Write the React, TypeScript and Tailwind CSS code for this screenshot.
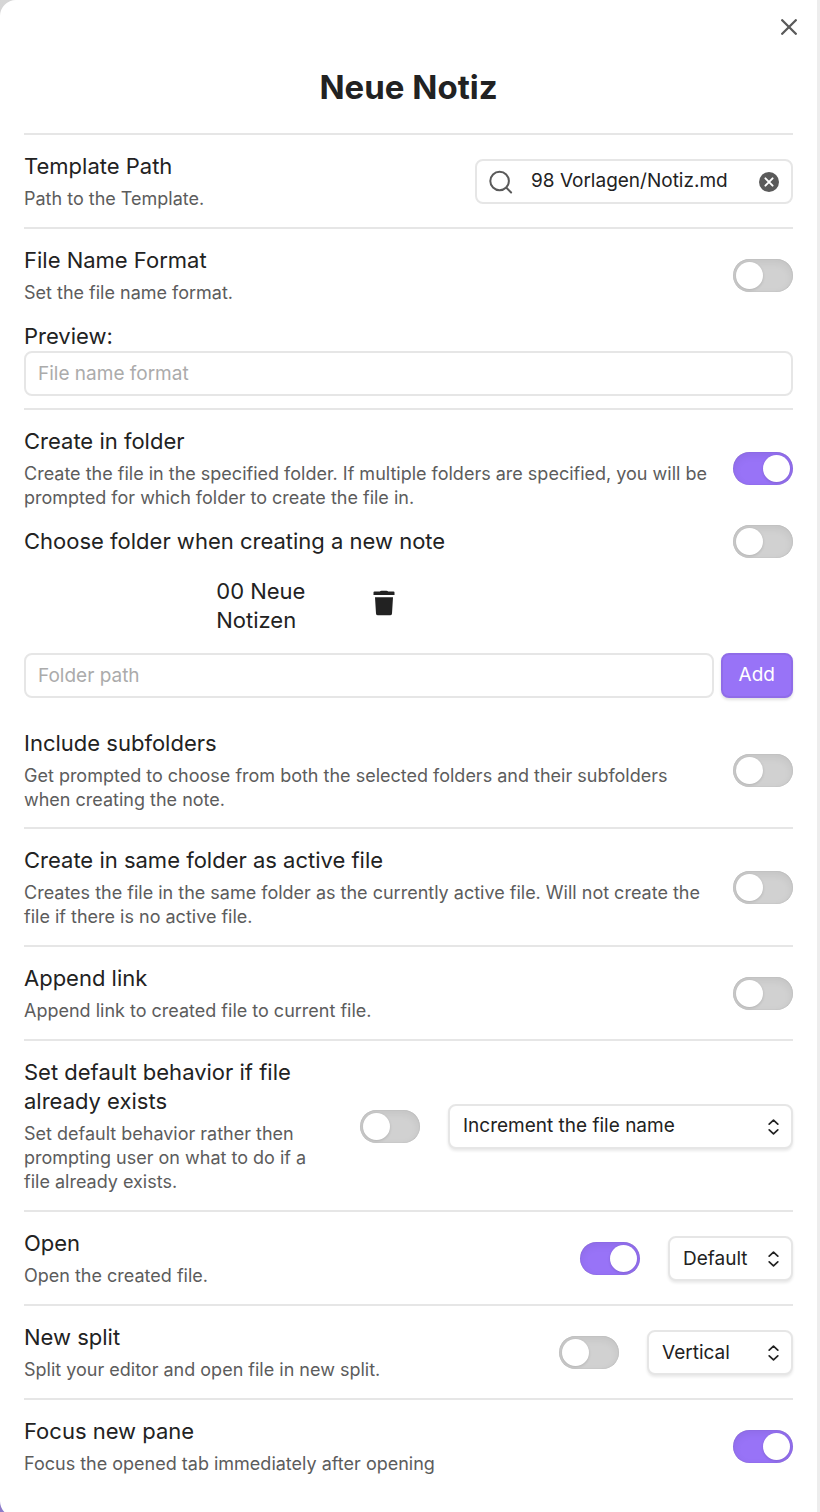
import React, { useState } from 'react';

interface ToggleProps {
  label: string;
  defaultChecked?: boolean;
}

function Toggle({ label, defaultChecked = false }: ToggleProps) {
  return (
    <input
      type="checkbox"
      role="switch"
      aria-label={label}
      defaultChecked={defaultChecked}
      className="h-[33px] w-[60px] shrink-0 cursor-pointer appearance-none rounded-full bg-[#d1d1d1] p-[3px] shadow-[inset_0_3px_8px_rgba(0,0,0,0.07),inset_0_0_1px_rgba(0,0,0,0.25)] transition-colors before:block before:size-[27px] before:rounded-full before:bg-white before:shadow-[0_1px_3px_rgba(0,0,0,0.15)] before:transition-transform checked:bg-[#9873f7] checked:before:translate-x-[27px]"
    />
  );
}

interface DropdownProps {
  label: string;
  options: string[];
}

function Dropdown({ label, options }: DropdownProps) {
  return (
    <div className="relative w-full">
      <select
        aria-label={label}
        className="h-[45px] w-full cursor-pointer appearance-none rounded-lg border-2 border-[#e6e6e6] bg-white pr-8 pl-[13px] text-[19px] leading-6 text-[#222222] shadow-[0_2px_3px_rgba(0,0,0,0.09)]"
      >
        {options.map((option) => (
          <option key={option}>{option}</option>
        ))}
      </select>
      <svg
        className="pointer-events-none absolute top-[15px] right-[14px]"
        width="11"
        height="16"
        viewBox="0 0 11 16"
        fill="none"
        stroke="#222222"
        strokeWidth="1.7"
        strokeLinecap="round"
        strokeLinejoin="round"
      >
        <path d="M1.2 5.2 5.5 1.2l4.3 4M1.2 10.8l4.3 4 4.3-4" />
      </svg>
    </div>
  );
}

interface SettingItemProps {
  name: string;
  description?: string;
  className?: string;
  children: React.ReactNode;
}

function SettingItem({ name, description, className = 'pt-[17px] pb-4', children }: SettingItemProps) {
  return (
    <div className={`flex items-center gap-6 ${className}`}>
      <div className="min-w-0 flex-1">
        <div className="text-[22px] leading-[29px] text-[#222222]">{name}</div>
        {description && (
          <div className="mt-1.5 text-[18px] leading-6 text-[#5c5c5c]">{description}</div>
        )}
      </div>
      <div className="flex items-center gap-7">{children}</div>
    </div>
  );
}

const inputClass =
  'h-[45px] w-full min-w-0 rounded-lg border-2 border-[#e6e6e6] bg-white px-3 text-[19px] text-[#222222] placeholder:text-[#ababab]';

export default function App() {
  const [template, setTemplate] = useState('98 Vorlagen/Notiz.md');
  const [folders, setFolders] = useState(['00 Neue Notizen']);
  const [folderPath, setFolderPath] = useState('');

  const addFolder = () => {
    if (!folderPath) return;
    setFolders([...folders, folderPath]);
    setFolderPath('');
  };

  return (
    <div className="flex min-h-screen overflow-hidden bg-linear-to-b from-[#d6d6d6] to-[#8d7bc9] font-['Inter',sans-serif]">
      <main className="-mb-[5px] flex-1 rounded-l-2xl border-r-3 border-[#ededed] bg-white">
        {/* Close */}
        <div className="flex h-[54px] items-center justify-end pr-[18px]">
          <button type="button" aria-label="Close" className="cursor-pointer p-0.5">
            <svg width="16" height="16" viewBox="0 0 16 16" stroke="#5a5a5a" strokeWidth="2.3" strokeLinecap="round">
              <path d="M1.2 1.2l13.6 13.6M14.8 1.2 1.2 14.8" />
            </svg>
          </button>
        </div>

        <div className="px-6">
          <h1 className="pt-3 pb-6 text-center text-[33px] leading-[43px] font-bold text-[#222222]">Neue Notiz</h1>

          <div className="divide-y-2 divide-[#e6e6e6] border-t-2 border-[#e6e6e6]">
            <SettingItem name="Template Path" description="Path to the Template.">
              <div className="flex h-[45px] w-[318px] items-center rounded-lg border-2 border-[#e6e6e6] px-3">
                <svg
                  className="shrink-0"
                  width="24"
                  height="24"
                  viewBox="0 0 24 24"
                  fill="none"
                  stroke="#5a5a5a"
                  strokeWidth="2"
                  strokeLinecap="round"
                >
                  <circle cx="10.6" cy="11" r="9.3" />
                  <path d="M17.4 17.8l4.7 4.700" />
                </svg>
                <input
                  type="text"
                  aria-label="Template Path"
                  value={template}
                  onChange={(e) => setTemplate(e.target.value)}
                  className="ml-[18px] min-w-0 flex-1 text-[19px] text-[#222222] outline-none"
                />
                <button
                  type="button"
                  aria-label="Clear"
                  onClick={() => setTemplate('')}
                  className="shrink-0 cursor-pointer"
                >
                  <svg width="20" height="20" viewBox="0 0 20 20">
                    <circle cx="10" cy="10" r="10" fill="#5a5a5a" />
                    <path d="M6.4 6.4l7.2 7.2M13.6 6.4l-7.2 7.2" stroke="#fff" strokeWidth="2" strokeLinecap="round" />
                  </svg>
                </button>
              </div>
            </SettingItem>

            <div className="pb-3">
              <SettingItem
                name="File Name Format"
                description="Set the file name format."
                className="pt-[17px] pb-[17px]"
              >
                <Toggle label="File Name Format" />
              </SettingItem>
              <label htmlFor="file-name-format" className="block text-[22px] leading-[29px] text-[#222222]">
                Preview:
              </label>
              <input id="file-name-format" type="text" placeholder="File name format" className={inputClass} />
            </div>

            {/* Folder settings */}
            <div>
              <SettingItem
                name="Create in folder"
                description="Create the file in the specified folder. If multiple folders are specified, you will be prompted for which folder to create the file in."
                className="pt-[17px] pb-[15px]"
              >
                <Toggle label="Create in folder" defaultChecked />
              </SettingItem>
              <SettingItem name="Choose folder when creating a new note" className="pb-[19px]">
                <Toggle label="Choose folder when creating a new note" />
              </SettingItem>
              <ul className="pb-[18px]">
                {folders.map((folder) => (
                  <li key={folder} className="grid grid-cols-4 items-center">
                    <span className="col-start-2 pr-16 text-[22px] leading-[29px] text-[#222222]">{folder}</span>
                    <button
                      type="button"
                      aria-label={`Delete ${folder}`}
                      onClick={() => setFolders(folders.filter((f) => f !== folder))}
                      className="-ml-9 cursor-pointer justify-self-start pb-1.5"
                    >
                      <svg width="22" height="26" viewBox="0 0 22 26" fill="#222222">
                        <path d="M.5 2.500q0-1 1-1h5.300Q7.500.7 8.500.7h5q1 0 1.700.8h5.300q1 0 1 1V5H.5z" />
                        <path d="M2 7.200h18l-1 16.200a2 2 0 0 1-2 1.900H5a2 2 0 0 1-2-1.900z" />
                      </svg>
                    </button>
                  </li>
                ))}
              </ul>
              <div className="flex gap-[7px]">
                <input
                  type="text"
                  aria-label="Folder path"
                  placeholder="Folder path"
                  value={folderPath}
                  onChange={(e) => setFolderPath(e.target.value)}
                  className={inputClass}
                />
                <button
                  type="button"
                  onClick={addFolder}
                  className="h-[45px] cursor-pointer rounded-lg border-2 border-[#8f6ce8] bg-[#9873f7] px-4 text-[19px] text-white shadow-[0_2px_3px_rgba(0,0,0,0.12)]"
                >
                  Add
                </button>
              </div>
              <SettingItem
                name="Include subfolders"
                description="Get prompted to choose from both the selected folders and their subfolders when creating the note."
                className="pt-[31px] pb-[15px]"
              >
                <Toggle label="Include subfolders" />
              </SettingItem>
            </div>

            <SettingItem
              name="Create in same folder as active file"
              description="Creates the file in the same folder as the currently active file. Will not create the file if there is no active file."
            >
              <Toggle label="Create in same folder as active file" />
            </SettingItem>

            <SettingItem name="Append link" description="Append link to created file to current file.">
              <Toggle label="Append link" />
            </SettingItem>

            <SettingItem
              name="Set default behavior if file already exists"
              description="Set default behavior rather then prompting user on what to do if a file already exists."
            >
              <Toggle label="Set default behavior if file already exists" />
              <div className="w-[345px]">
                <Dropdown
                  label="Behavior if file already exists"
                  options={['Increment the file name', 'Append to the bottom of the file', 'Overwrite the file', 'Nothing']}
                />
              </div>
            </SettingItem>

            <SettingItem name="Open" description="Open the created file.">
              <Toggle label="Open" defaultChecked />
              <div className="w-[125px]">
                <Dropdown label="View mode" options={['Default', 'Preview', 'Source']} />
              </div>
            </SettingItem>

            <SettingItem name="New split" description="Split your editor and open file in new split.">
              <Toggle label="New split" />
              <div className="w-[146px]">
                <Dropdown label="Split direction" options={['Vertical', 'Horizontal']} />
              </div>
            </SettingItem>

            <SettingItem name="Focus new pane" description="Focus the opened tab immediately after opening">
              <Toggle label="Focus new pane" defaultChecked />
            </SettingItem>
          </div>
        </div>
      </main>
    </div>
  );
}
